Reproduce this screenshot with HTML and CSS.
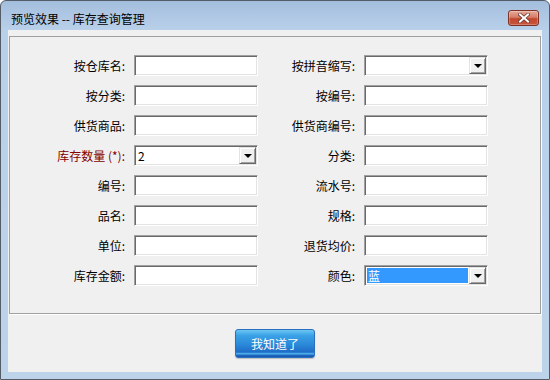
FILE: index.html
```html
<!DOCTYPE html>
<html>
<head>
    <title>预览效果 -- 库存查询管理</title>
    <link rel="stylesheet" href="styles.css">
</head>
<body>
    <div class="window">
        <div class="titlebar">
            <span class="title">预览效果 -- 库存查询管理</span>
            <button class="close-btn" type="button">
                <svg width="12" height="10" viewBox="0 0 12 10">
                    <path d="M2 1.5 L10 8.5 M10 1.5 L2 8.5" stroke="#6b3a32" stroke-width="3.6" stroke-linecap="square"/>
                    <path d="M2 1.5 L10 8.5 M10 1.5 L2 8.5" stroke="#ffffff" stroke-width="2" stroke-linecap="square"/>
                </svg>
            </button>
        </div>
        <div class="client">
            <div class="group">
                <div class="form-grid">
                    <label>按仓库名:</label>
                    <div class="field"></div>
                    <label>按拼音缩写:</label>
                    <div class="field combo"><span class="combo-text"></span><span class="drop-btn"></span></div>

                    <label>按分类:</label>
                    <div class="field"></div>
                    <label>按编号:</label>
                    <div class="field"></div>

                    <label>供货商品:</label>
                    <div class="field"></div>
                    <label>供货商编号:</label>
                    <div class="field"></div>

                    <label class="required">库存数量 (*):</label>
                    <div class="field combo"><span class="combo-text">2</span><span class="drop-btn"></span></div>
                    <label>分类:</label>
                    <div class="field"></div>

                    <label>编号:</label>
                    <div class="field"></div>
                    <label>流水号:</label>
                    <div class="field"></div>

                    <label>品名:</label>
                    <div class="field"></div>
                    <label>规格:</label>
                    <div class="field"></div>

                    <label>单位:</label>
                    <div class="field"></div>
                    <label>退货均价:</label>
                    <div class="field"></div>

                    <label>库存金额:</label>
                    <div class="field"></div>
                    <label>颜色:</label>
                    <div class="field combo"><span class="combo-text selected">蓝</span><span class="drop-btn"></span></div>
                </div>
            </div>
            <div class="footer">
                <button class="ok-btn" type="button">我知道了</button>
            </div>
        </div>
    </div>
</body>
</html>
```

FILE: styles.css
```css
body {
    margin: 0;
    font-family: "Noto Sans CJK SC", "Liberation Sans", sans-serif;
    font-size: 12px;
    color: #000;
}
.window {
    box-sizing: border-box;
    width: 550px;
    height: 380px;
    display: flex;
    flex-direction: column;
    border: 1px solid #545c66;
    border-radius: 6px 6px 0 0;
    background: linear-gradient(#a3bedd, #b9d0ea 29px, #bcd3ea);
}
.titlebar {
    height: 29px;
    display: flex;
    align-items: flex-start;
    padding: 0 10px 0 10px;
}
.title {
    margin-top: 10px;
    line-height: 16px;
    white-space: nowrap;
}
.close-btn {
    margin: 9px 0 0 auto;
    width: 31px;
    height: 16px;
    padding: 0;
    border: 1px solid #7c3326;
    border-radius: 3px;
    background: linear-gradient(#e7aa9b, #d57c66 45%, #c2472f 55%, #c9563c);
    display: flex;
    align-items: center;
    justify-content: center;
    box-shadow: inset 0 0 0 1px rgba(255,255,255,0.25);
}
.client {
    flex: 1;
    margin: 0 7px 7px 7px;
    background-color: #f0f0f0;
    display: flex;
    flex-direction: column;
    padding: 6px 1px 0 1px;
}
.group {
    box-sizing: border-box;
    height: 278px;
    border: 1px solid #a0a0a0;
    box-shadow: 1px 1px 0 #fff;
}
.form-grid {
    display: grid;
    grid-template-columns: 124px 124px 106px 124px;
    grid-auto-rows: 21px;
    row-gap: 9px;
    padding-top: 18px;
}
label {
    display: flex;
    align-items: center;
    justify-content: flex-end;
    padding-right: 9px;
    white-space: pre;
}
label.required {
    color: #800000;
}
.field {
    box-sizing: border-box;
    background-color: #fff;
    border: 1px solid;
    border-color: #a0a0a0 #fff #fff #a0a0a0;
    box-shadow: inset 1px 1px 0 #696969, inset -1px -1px 0 #e3e3e3;
}
.combo {
    display: flex;
    align-items: stretch;
    padding: 1px;
}
.combo-text {
    flex: 1;
    line-height: 17px;
    padding-left: 2px;
}
.combo-text.selected {
    margin: 1px 1px 1px 1px;
    line-height: 15px;
    padding-left: 1px;
    background-color: #3399ff;
    color: #fff;
}
.drop-btn {
    box-sizing: border-box;
    width: 17px;
    background-color: #f0f0f0;
    border: 1px solid;
    border-color: #e3e3e3 #696969 #696969 #e3e3e3;
    box-shadow: inset 1px 1px 0 #fff, inset -1px -1px 0 #a0a0a0;
    display: flex;
    align-items: center;
    justify-content: center;
}
.drop-btn::after {
    content: "";
    width: 0;
    height: 0;
    border-left: 4px solid transparent;
    border-right: 4px solid transparent;
    border-top: 4px solid #000;
    margin-top: 1px;
}
.footer {
    flex: 1;
    display: flex;
    align-items: center;
    justify-content: center;
}
.ok-btn {
    width: 80px;
    height: 29px;
    padding: 0;
    border: 1px solid #2a6fc0;
    border-radius: 3px;
    background: linear-gradient(#6cc6f4, #3ba2e6 20%, #2a88d8 55%, #1f6cc6 82%, #53b6ee 88%, #1d63bd 94%, #1a58ad);
    color: #fff;
    font-family: "Noto Sans CJK SC", sans-serif;
    font-size: 12px;
    cursor: pointer;
    box-shadow: 0 1px 1px rgba(0,0,0,0.2);
}
```
